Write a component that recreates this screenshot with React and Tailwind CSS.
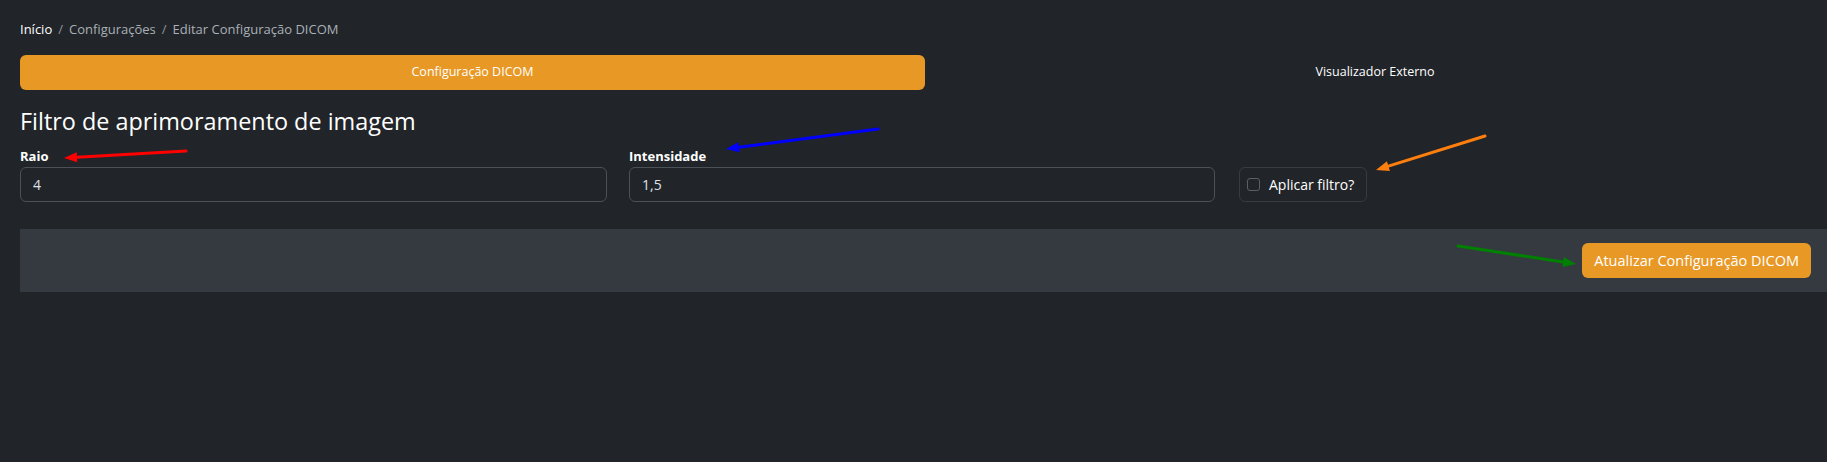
import { useState } from 'react';

const Arrow = ({ x1, y1, x2, y2, color }) => {
  const dx = x2 - x1;
  const dy = y2 - y1;
  const len = Math.sqrt(dx * dx + dy * dy);
  const ux = dx / len;
  const uy = dy / len;
  const bx = x2 - ux * 13;
  const by = y2 - uy * 13;
  const px = -uy * 5;
  const py = ux * 5;
  return (
    <g>
      <line x1={x1} y1={y1} x2={bx} y2={by} stroke={color} strokeWidth="3" strokeLinecap="round" />
      <polygon points={`${x2},${y2} ${bx + px},${by + py} ${bx - px},${by - py}`} fill={color} />
    </g>
  );
};

export default function App() {
  const [tab, setTab] = useState('dicom');
  const [form, setForm] = useState({ raio: '4', intensidade: '1,5', aplicar: false });

  return (
    <div className="relative min-h-screen bg-[#212529] px-[20px] pt-[19px] font-['Open_Sans',sans-serif] text-[#dee2e6]">
      <nav className="flex items-center gap-[6px] text-[13px] leading-[20px]">
        <a className="text-white">Início</a>
        <span className="text-[#8f969c]">/</span>
        <a className="text-[#a9b0b7]">Configurações</a>
        <span className="text-[#8f969c]">/</span>
        <span className="text-[#a9b0b7]">Editar Configuração DICOM</span>
      </nav>

      <div className="mt-[16px] flex gap-[18px]">
        <button
          onClick={() => setTab('dicom')}
          className={`h-[35px] w-[905px] shrink-0 rounded-[6px] text-[12.5px] text-white ${tab === 'dicom' ? 'bg-[#e89825]' : ''}`}
        >
          Configuração DICOM
        </button>
        <button
          onClick={() => setTab('visualizador')}
          className={`h-[35px] flex-1 rounded-[6px] text-[12.5px] text-white ${tab === 'visualizador' ? 'bg-[#e89825]' : ''}`}
        >
          Visualizador Externo
        </button>
      </div>

      <h2 className="mt-[17px] text-[23.4px] leading-[28px] text-white">Filtro de aprimoramento de imagem</h2>

      <div className="mt-[12px] flex items-end">
        <div className="w-[587px]">
          <label className="block text-[13px] leading-[18px] font-bold text-white">Raio</label>
          <input
            type="text"
            value={form.raio}
            onChange={(e) => setForm({ ...form, raio: e.target.value })}
            className="mt-[2px] h-[35px] w-full rounded-[6px] border border-[#4b5157] bg-[#212529] px-[12px] text-[14px] text-[#dee2e6] outline-none"
          />
        </div>
        <div className="ml-[22px] w-[586px]">
          <label className="block text-[13px] leading-[18px] font-bold text-white">Intensidade</label>
          <input
            type="text"
            value={form.intensidade}
            onChange={(e) => setForm({ ...form, intensidade: e.target.value })}
            className="mt-[2px] h-[35px] w-full rounded-[6px] border border-[#4b5157] bg-[#212529] px-[12px] text-[14px] text-[#dee2e6] outline-none"
          />
        </div>
        <label className="ml-[24px] flex h-[35px] w-[128px] items-center gap-[9px] rounded-[6px] border border-[#373c42] px-[7px] text-[14px] text-white">
          <input
            type="checkbox"
            checked={form.aplicar}
            onChange={(e) => setForm({ ...form, aplicar: e.target.checked })}
            className="h-[13px] w-[13px] appearance-none rounded-[3px] border border-[#5a6066] bg-[#212529]"
          />
          Aplicar filtro?
        </label>
      </div>

      <div className="-mr-[20px] mt-[27px] flex h-[63px] items-center justify-end bg-[#343a40] pr-[16px]">
        <button className="h-[35px] rounded-[6px] bg-[#e89825] px-[12px] text-[14.5px] text-white">
          Atualizar Configuração DICOM
        </button>
      </div>

      <svg className="pointer-events-none absolute left-0 top-0" width="1827" height="462">
        <Arrow x1={186} y1={151} x2={64} y2={158} color="#ff0000" />
        <Arrow x1={878} y1={129} x2={726} y2={149} color="#0000ff" />
        <Arrow x1={1485} y1={136} x2={1376} y2={170} color="#ff7f0e" />
        <Arrow x1={1458} y1={246} x2={1576} y2={264} color="#008000" />
      </svg>
    </div>
  );
}
